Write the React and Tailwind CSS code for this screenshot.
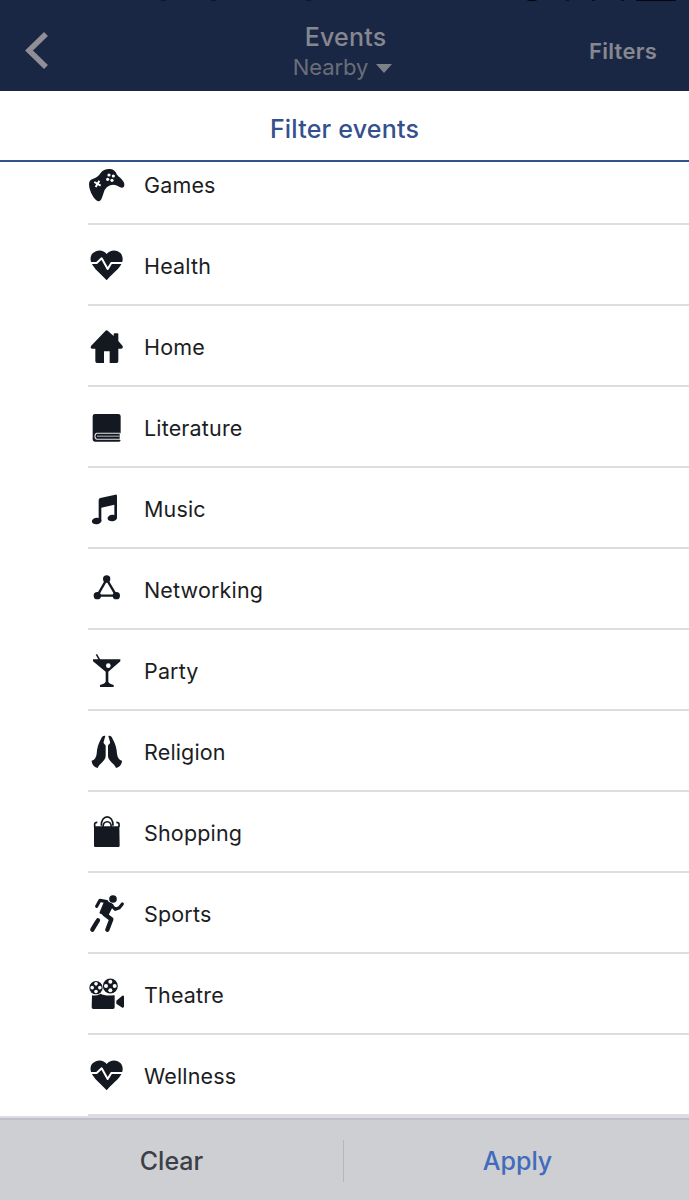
import React from "react";

const INK = "#141821";

const heart = (
  <>
    <path d="M80 282C90 268 112 268 122 280C130 290 130 304 122 316C112 332 92 346 80 361C66 346 48 332 38 316C29 302 30 288 38 280C50 268 70 268 80 282Z" fill={INK} />
    <path d="M28 309H50L65 295L83 327L94 309H132" fill="none" stroke="#fff" strokeWidth="6" strokeLinejoin="round" />
  </>
);

const items = [
  {
    label: "Games",
    box: "21 15 120 120",
    art: (
      <>
        <path d="M27 73C27 63 32 58 40 56C50 53 56 48 62 39C67 30 80 26 91 27C101 28 107 34 110 43C114 50 125 55 131 66C135 75 133 83 126 83C118 83 112 74 100 74C87 74 76 83 72 95C68 106 65 123 56 124C45 125 27 94 27 73Z" fill={INK} />
        <path d="M43 66L62 77M58 62L47 81" stroke="#fff" strokeWidth="6" />
        <g fill="#fff">
          <circle cx="87" cy="45" r="4.8" />
          <circle cx="100" cy="48" r="4.8" />
          <circle cx="83" cy="58" r="4.8" />
          <circle cx="96" cy="61" r="4.8" />
        </g>
      </>
    ),
  },
  { label: "Health", box: "21 258 120 120", art: heart },
  {
    label: "Home",
    box: "21 21 120 120",
    art: (
      <path d="M76 33Q80 29 84 33L101 48V43Q101 40 104 40H112Q115 40 115 43V63L128 78Q130 86 123 86H115V124Q115 129 110 129H89V94H72V129H51Q46 129 46 124V86H37Q30 86 33 78Z" fill={INK} />
    ),
  },
  {
    label: "Literature",
    box: "21 264 120 120",
    art: (
      <>
        <path d="M45 282H115Q122 282 122 289V338L119 342V358L122 362Q120 365 116 365H46Q38 365 38 357V289Q38 282 45 282Z" fill={INK} />
        <path d="M121 339.5H51Q45 340 45 348.5Q45 357 51 357.5H121" fill="none" stroke="#e4e5e8" strokeWidth="3.2" />
        <path d="M51 348.5H119" stroke="#b9bbc0" strokeWidth="3" />
      </>
    ),
  },
  {
    label: "Music",
    box: "21 27 120 120",
    art: (
      <g fill={INK}>
        <path d="M56 60Q56 55 61 54L106 44Q111 43 111 48V114H103V74L64 83V124H56Z" />
        <ellipse cx="50" cy="123" rx="14.5" ry="9.8" transform="rotate(-10 50 123)" />
        <ellipse cx="97" cy="114" rx="14.5" ry="9.8" transform="rotate(-10 97 114)" />
      </g>
    ),
  },
  {
    label: "Networking",
    box: "21 269 120 120",
    art: (
      <g fill={INK}>
        <path d="M80 297L52 346H109Z" fill="none" stroke={INK} strokeWidth="7" />
        <circle cx="80" cy="296" r="11" />
        <circle cx="52" cy="346" r="11" />
        <circle cx="109" cy="346" r="11" />
      </g>
    ),
  },
  {
    label: "Party",
    box: "21 33 120 120",
    art: (
      <>
        <path d="M39 58H121V64L85 95V125Q86 130 101 135V141H60V135Q76 130 77 125V95L39 64Z" fill={INK} />
        <path d="M49 43L59 60" stroke={INK} strokeWidth="4.5" />
        <circle cx="85" cy="77" r="7" fill="#fff" />
      </>
    ),
  },
  {
    label: "Religion",
    box: "21 276 120 120",
    art: (
      <g fill={INK}>
        <path d="M76 288C70 286 66 290 63 297C55 311 51 325 50 341C49 352 43 360 35 362C35 373 43 382 53 384C58 370 77 363 77 347V318C77 312 69 313 71 305Z" />
        <path d="M85 288C91 286 95 290 98 297C106 311 110 325 111 341C112 352 118 360 126 362C126 373 118 382 108 384C103 370 84 363 84 347V318C84 312 92 313 90 305Z" />
      </g>
    ),
  },
  {
    label: "Shopping",
    box: "21 38 120 120",
    art: (
      <>
        <path d="M42 78H118L119 136Q119 140 115 140H46Q42 140 42 136Z" fill={INK} />
        <path d="M44 80V71Q44 66 52 66M117 80V71Q117 66 109 66" fill="none" stroke={INK} strokeWidth="5" />
        <path d="M64 76C63 41 100 41 99 76" fill="none" stroke={INK} strokeWidth="5" />
        <path d="M69 80C70 59 93 59 94 80" fill="none" stroke={INK} strokeWidth="5" />
      </>
    ),
  },
  {
    label: "Sports",
    box: "21 282 120 120",
    art: (
      <g fill="none" stroke={INK} strokeLinecap="round" strokeLinejoin="round">
        <circle cx="99" cy="297" r="11.5" fill={INK} stroke="none" />
        <path d="M50 319L60 301L80 305" strokeWidth="9.5" />
        <path d="M93 315L106 328L118 323L127 312" strokeWidth="9.5" />
        <path d="M76 304L97 315L82 345L62 338Z" fill={INK} strokeWidth="7" />
        <path d="M73 342L94 358L82 389" strokeWidth="13" />
        <path d="M54 361L50 367L37 389" strokeWidth="13" />
      </g>
    ),
  },
  {
    label: "Theatre",
    box: "21 45 120 120",
    art: (
      <>
        <circle cx="48" cy="83" r="20" fill={INK} />
        <circle cx="91" cy="78" r="22.5" fill={INK} />
        <g fill="#fff">
          <circle cx="48" cy="71.5" r="5.4" />
          <circle cx="36.5" cy="83" r="5.4" />
          <circle cx="59.5" cy="83" r="5.4" />
          <circle cx="48" cy="94.5" r="5.4" />
          <circle cx="91" cy="65" r="6" />
          <circle cx="78" cy="78" r="6" />
          <circle cx="104" cy="78" r="6" />
          <circle cx="91" cy="91" r="6" />
        </g>
        <path d="M36 106Q48 109 62 101Q70 108 104 106V142Q104 147 99 147H40Q35 147 35 142Z" fill={INK} />
        <path d="M109 122L127 107Q132 106 132 110V139Q132 144 127 143L109 131Z" fill={INK} />
      </>
    ),
  },
  { label: "Wellness", box: "21 258 120 120", art: heart },
];

function Row({ label, box, art }) {
  return (
    <li className="ml-[88px] flex h-[81px] shrink-0 items-center border-b-2 border-[#dddddf]">
      <svg className="-ml-px mt-0.5 size-10 shrink-0" viewBox={box}>
        {art}
      </svg>
      <span className="ml-[17px] mt-[5px] text-[21.5px] leading-none tracking-[0.16px] text-[#1b1d23]">{label}</span>
    </li>
  );
}

export default function App() {
  return (
    <div className="flex h-[1200px] w-[689px] flex-col overflow-hidden bg-white font-['Inter',sans-serif]">
      <header className="relative grid h-[91px] shrink-0 grid-cols-[1fr_auto_1fr] items-center bg-[#1a2744] text-[#85888f]">
        <svg className="absolute left-0 top-0 h-[2px] w-full" viewBox="0 0 689 2" fill="#05070d">
          <ellipse cx="532" cy="-2" rx="7" ry="3.3" />
          <rect x="636" y="-2" width="40" height="3" rx="1" />
          <rect x="161" y="0" width="5" height="0.5" />
          <rect x="211" y="0" width="5" height="0.5" />
          <rect x="306" y="0" width="5" height="0.5" />
          <rect x="566" y="0" width="3" height="0.7" />
          <rect x="592" y="0" width="3" height="0.7" />
          <rect x="621" y="0" width="3" height="0.7" />
        </svg>
        <svg className="ml-6 mt-2 h-10 w-6" viewBox="0 0 24 40" fill="none" stroke="#908f96" strokeWidth="5.5">
          <path d="M22 4L5 20.5L22 37" />
        </svg>
        <div className="ml-0.5 mt-[13px] flex flex-col items-center">
          <span className="text-[25px] font-medium leading-[31px] tracking-[0.2px]">Events</span>
          <span className="-ml-1.5 flex items-center gap-2 text-[22px] leading-[29px] tracking-[-0.05px] text-[#696e79]">
            Nearby
            <svg className="mt-0.5 h-[9px] w-4" viewBox="0 0 16 9" fill="#7d8087">
              <path d="M0 0H16L8 9Z" />
            </svg>
          </span>
        </div>
        <span className="mr-8 mt-2.5 justify-self-end text-[22px] font-semibold leading-none tracking-[0.25px]">Filters</span>
      </header>
      <div className="flex h-[71px] shrink-0 items-center justify-center border-b-2 border-[#31528a] pt-[7px]">
        <h1 className="text-[25px] font-medium leading-none tracking-[0.2px] text-[#34508d]">Filter events</h1>
      </div>
      <main className="h-[954px] shrink-0 overflow-hidden">
        <ul className="-mt-[18px] flex flex-col">
          {items.map((item) => (
            <Row key={item.label} {...item} />
          ))}
        </ul>
      </main>
      <footer className="flex flex-1 flex-col border-t-2 border-[#dcdde2] bg-[#cecfd3]">
        <div className="flex flex-1 items-center border-t-2 border-[#bfc0ca] pt-0.5">
          <button className="flex-1 text-[25px] font-medium leading-none text-[#3b4047]">Clear</button>
          <div className="h-[42px] w-px bg-[#b5b6be]" />
          <button className="flex-1 pl-0.5 text-[25px] font-medium leading-none text-[#426bbc]">Apply</button>
        </div>
      </footer>
    </div>
  );
}
